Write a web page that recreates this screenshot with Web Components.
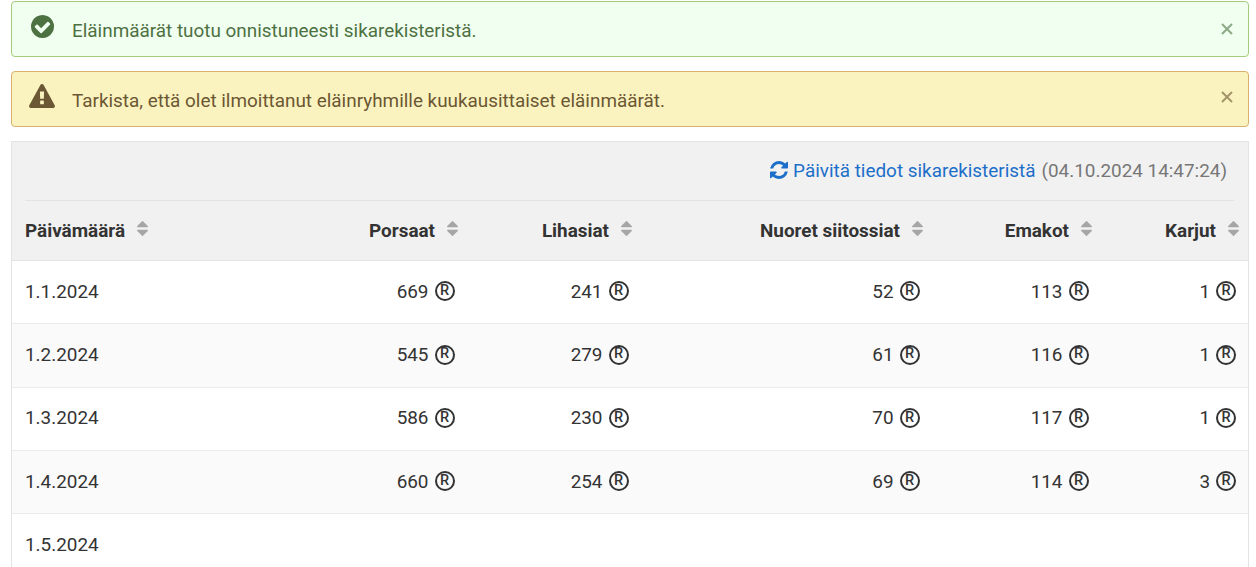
<!DOCTYPE html>
<html lang="fi">
<head>
<meta charset="utf-8">
<title>Eläinmäärät</title>
<style>
  html, body { margin: 0; background: #fff; }
  body {
    height: 567px;
    box-sizing: border-box;
    overflow: hidden;
    padding: 1px 7px 0 11px;
    font-family: Roboto, "Liberation Sans", sans-serif;
    font-size: 18.9px;
    color: #333;
    display: flex;
    flex-direction: column;
    gap: 14px;
  }
  body > * { flex: none; }
</style>
</head>
<body>
<app-alert type="success">Eläinmäärät tuotu onnistuneesti sikarekisteristä.</app-alert>
<app-alert type="warning">Tarkista, että olet ilmoittanut eläinryhmille kuukausittaiset eläinmäärät.</app-alert>
<animal-table></animal-table>

<script>
const ICONS = {
  success: '<svg width="23" height="23" viewBox="128 128 1536 1536"><path fill="currentColor" d="M1412 734q0-28-18-46l-91-90q-19-19-45-19t-45 19l-408 407-226-226q-19-19-45-19t-45 19l-91 90q-18 18-18 46 0 27 18 45l362 362q19 19 45 19 27 0 46-19l543-543q18-18 18-45zm252 162q0 209-103 385.500t-279.500 279.500-385.500 103-385.500-103-279.500-279.500-103-385.500 103-385.500 279.500-279.500 385.500-103 385.500 103 279.500 279.500 103 385.500z"/></svg>',
  warning: '<svg width="26" height="24" viewBox="0 0 1792 1664"><path fill="currentColor" d="M1024 1375v-190q0-14-9.500-23.500t-22.500-9.500h-192q-13 0-22.500 9.500t-9.500 23.500v190q0 14 9.500 23.500t22.500 9.500h192q13 0 22.500-9.500t9.500-23.500zm-2-374l18-459q0-12-10-19-13-11-24-11h-220q-11 0-24 11-10 7-10 21l17 457q0 10 10 16.500t24 6.500h185q14 0 23.500-6.500t10.500-16.500zm-14-934l768 1408q35 63-2 126-17 29-46.500 46t-63.500 17h-1536q-34 0-63.500-17t-46.500-46q-37-63-2-126l768-1408q17-31 47-49t65-18 65 18 47 49z"/></svg>'
};

class AppAlert extends HTMLElement {
  constructor() {
    super();
    this.attachShadow({ mode: 'open' });
  }

  connectedCallback() {
    const type = this.getAttribute('type');
    this.shadowRoot.innerHTML = `
      <style>
        :host {
          display: flex;
          align-items: center;
          height: 56px;
          box-sizing: border-box;
          padding: 3px 14px 0 17px;
          border: 1px solid;
          border-radius: 4px;
        }
        :host([type=success]) { background: #f0fff0; border-color: #a3cd7c; color: #4e7142; }
        :host([type=warning]) { background: #fbf3bf; border-color: #d9b16c; color: #6b5733; }
        .icon { width: 26px; display: flex; justify-content: center; margin-right: 17px; position: relative; top: -4px; }
        :host([type=warning]) .icon { top: -5px; }
        .text { flex: 1; }
        .close { width: 14px; height: 14px; opacity: .6; position: relative; top: -2px; }
        :host([type=warning]) .close { top: -4px; }
      </style>
      <span class="icon">${ICONS[type]}</span>
      <span class="text"><slot></slot></span>
      <svg class="close" viewBox="0 0 14 14"><path d="M2 2l10 10M12 2L2 12" stroke="currentColor" stroke-width="2"/></svg>
    `;
  }
}
customElements.define('app-alert', AppAlert);

class SortHeader extends HTMLElement {
  constructor() {
    super();
    this.attachShadow({ mode: 'open' });
    this.shadowRoot.innerHTML = `
      <style>
        :host { display: flex; align-items: center; gap: 12px; font-weight: 700; color: #333; }
        :host([end]) { justify-content: flex-end; }
        svg { width: 11px; height: 15px; position: relative; top: -2px; }
      </style>
      <slot></slot>
      <svg viewBox="384 192 1024 1408"><path fill="#a6a6a6" d="M1408 1088q0 26-19 45l-448 448q-19 19-45 19t-45-19l-448-448q-19-19-19-45t19-45 45-19h896q26 0 45 19t19 45zm0-384q0 26-19 45t-45 19h-896q-26 0-45-19t-19-45 19-45l448-448q19-19 45-19t45 19l448 448q19 19 19 45z"/></svg>
    `;
  }
}
customElements.define('sort-header', SortHeader);

class RegValue extends HTMLElement {
  constructor() {
    super();
    this.attachShadow({ mode: 'open' });
    this.shadowRoot.innerHTML = `
      <style>
        :host { display: flex; justify-content: flex-end; align-items: center; gap: 6px; }
        .reg {
          width: 20px; height: 20px; box-sizing: border-box;
          border: 2px solid #333; border-radius: 50%;
          display: flex; align-items: center; justify-content: center;
          font-size: 14.5px; font-weight: 500; line-height: 1; color: #333;
        }
      </style>
      <slot></slot><span class="reg">R</span>
    `;
  }
}
customElements.define('reg-value', RegValue);

const COLUMNS = ['Päivämäärä', 'Porsaat', 'Lihasiat', 'Nuoret siitossiat', 'Emakot', 'Karjut'];
const ROWS = [
  ['1.1.2024', 669, 241, 52, 113, 1],
  ['1.2.2024', 545, 279, 61, 116, 1],
  ['1.3.2024', 586, 230, 70, 117, 1],
  ['1.4.2024', 660, 254, 69, 114, 3],
  ['1.5.2024']
];

class AnimalTable extends HTMLElement {
  constructor() {
    super();
    this.attachShadow({ mode: 'open' });
  }

  connectedCallback() {
    const head = COLUMNS.map((c, i) => `<sort-header ${i ? 'end' : ''} class="cell">${c}</sort-header>`).join('');
    const rows = ROWS.map(r => `
      <div class="row">
        ${r.map((v, i) => i ? `<reg-value class="cell">${v}</reg-value>` : `<span class="cell">${v}</span>`).join('')}
      </div>`).join('');

    this.shadowRoot.innerHTML = `
      <style>
        :host {
          display: block;
          border: 1px solid #e3e3e3;
          border-bottom: 0;
          --cols: 200px 246px 174px 291px 169px 143px;
        }
        .top { background: #f1f1f1; padding: 0 14px 0 13px; }
        .tools {
          height: 59px;
          box-sizing: border-box;
          padding: 0 7px 2px 0;
          display: flex;
          justify-content: flex-end;
          align-items: center;
          gap: 6px;
          border-bottom: 1px solid #e3e3e3;
          color: #777;
        }
        a { color: #1c6fc9; text-decoration: none; display: flex; align-items: center; gap: 5px; }
        a svg { width: 18px; height: 18px; }
        .head, .row { display: grid; grid-template-columns: var(--cols); padding: 0 0 0 13px; align-items: center; }
        .top .head { padding: 0; height: 59px; }
        .wrap { border-top: 1px solid #e3e3e3; }
        .row { height: 63.35px; box-sizing: border-box; padding-bottom: 2px; border-bottom: 1px solid #ebebeb; }
        .row:nth-child(even) { background: #fafafa; }
        .head .cell { padding-right: 13px; }
        .row .cell { padding-right: 16.5px; }
        .head .cell:last-child { padding-right: 9px; }
        .row .cell:last-child { padding-right: 12px; }
      </style>
      <div class="top">
        <div class="tools">
          <a href="#">
            <svg viewBox="128 128 1536 1536"><path fill="currentColor" d="M1639 1056q0 5-1 7-64 268-268 434.500t-478 166.500q-146 0-282.500-55t-243.500-157l-129 129q-19 19-45 19t-45-19-19-45v-448q0-26 19-45t45-19h448q26 0 45 19t19 45-19 45l-137 137q71 66 161 102t187 36q134 0 250-65t186-179q11-17 53-117 8-23 30-23h192q13 0 22.500 9.500t9.500 22.500zm25-800v448q0 26-19 45t-45 19h-448q-26 0-45-19t-19-45 19-45l138-138q-148-137-349-137-134 0-250 65t-186 179q-11 17-53 117-8 23-30 23h-199q-13 0-22.500-9.500t-9.500-22.500v-7q65-268 270-434.500t480-166.500q146 0 284 55.500t245 156.500l130-129q19-19 45-19t45 19 19 45z"/></svg>
            Päivitä tiedot sikarekisteristä
          </a>
          <span>(04.10.2024 14:47:24)</span>
        </div>
        <div class="head">${head}</div>
      </div>
      <div class="wrap">${rows}</div>
    `;
  }
}
customElements.define('animal-table', AnimalTable);
</script>
</body>
</html>
